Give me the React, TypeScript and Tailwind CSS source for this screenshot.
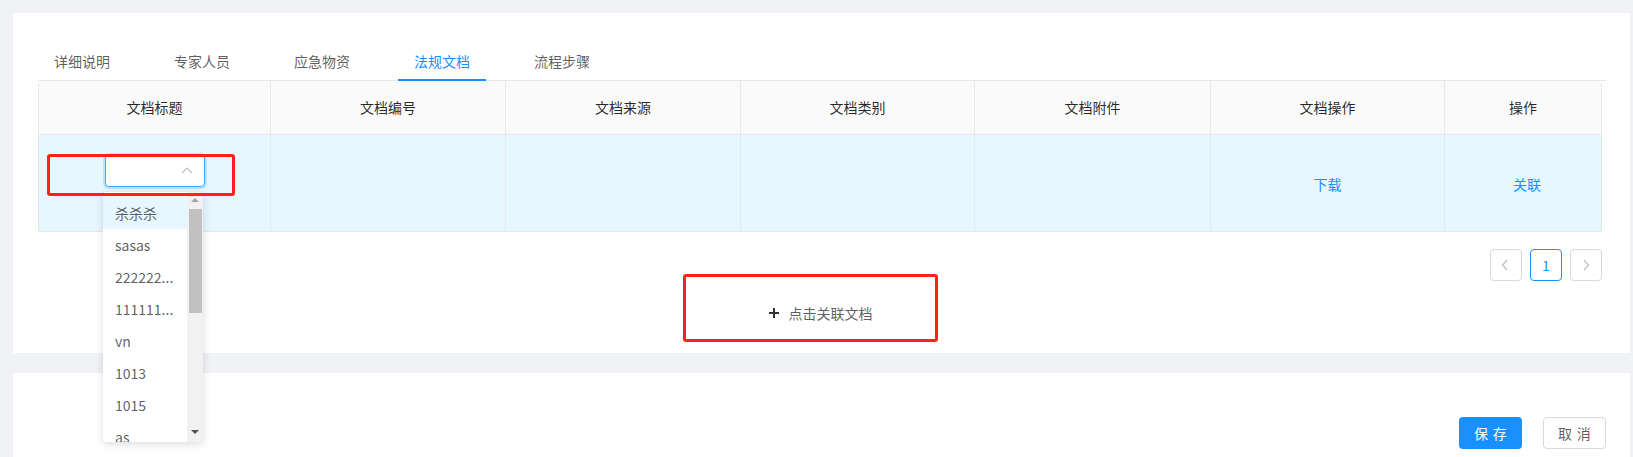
import React from 'react'

const tabs = ['详细说明', '专家人员', '应急物资', '法规文档', '流程步骤']
const columns = ['文档标题', '文档编号', '文档来源', '文档类别', '文档附件', '文档操作', '操作']
const options = ['杀杀杀', 'sasas', '222222...', '111111...', 'vn', '1013', '1015', 'as']

const Chevron = ({ dir, className }: { dir: 'up' | 'left' | 'right'; className?: string }) => {
  const d = dir === 'up' ? 'M2 9l5-5 5 5' : dir === 'left' ? 'M8 2L3.5 7 8 12' : 'M5 2l4.5 5L5 12'
  return (
    <svg className={className} width="14" height="14" viewBox="0 0 14 14" fill="none">
      <path d={d} stroke="currentColor" strokeWidth="1.2" />
    </svg>
  )
}

const App: React.FC = () => {
  return (
    <div className="relative w-[1633px] h-[457px] overflow-hidden bg-[#f0f2f5] pt-[13px] pl-[13px] pr-[3px] font-['Noto_Sans_CJK_SC','Microsoft_YaHei',sans-serif] text-[14px]">
      {/* main card */}
      <div className="bg-white pt-[25px] pl-[25px] pr-[28px] pb-[24px]">
        <div className="flex border-b border-[#e8e8e8] -mr-[4px] h-[43px]">
          {tabs.map((t) => (
            <div
              key={t}
              className={`relative mr-[32px] px-[16px] pt-[12px] leading-[22px] ${
                t === '法规文档' ? 'text-[#1890ff]' : 'text-[rgba(0,0,0,0.65)]'
              }`}
            >
              {t}
              {t === '法规文档' && <div className="absolute left-0 right-0 -bottom-[1px] h-[2px] bg-[#1890ff]"></div>}
            </div>
          ))}
        </div>

        <div className="border-x border-[#e8e8e8] rounded-t-[4px] overflow-hidden">
          <div className="grid grid-cols-[232px_235px_235px_234px_236px_234px_156px] bg-[#fafafa] h-[54px] border-b border-[#e8e8e8]">
            {columns.map((c, i) => (
              <div
                key={c}
                className={`flex items-center justify-center text-[rgba(0,0,0,0.85)] ${
                  i < columns.length - 1 ? 'border-r border-[#e8e8e8]' : ''
                }`}
              >
                {c}
              </div>
            ))}
          </div>
          <div className="grid grid-cols-[232px_235px_235px_234px_236px_234px_156px] bg-[#e6f7ff] h-[97px] border-b border-[#e8e8e8]">
            <div className="border-r border-[#e8e8e8] flex justify-center pt-[20px]">
              <div className="w-[100px] h-[32px] bg-white border border-[#40a9ff] rounded-[4px] shadow-[0_0_0_2px_rgba(24,144,255,0.2)] flex items-center justify-end pr-[10px]">
                <Chevron dir="up" className="text-[rgba(0,0,0,0.25)]" />
              </div>
            </div>
            <div className="border-r border-[#e8e8e8]"></div>
            <div className="border-r border-[#e8e8e8]"></div>
            <div className="border-r border-[#e8e8e8]"></div>
            <div className="border-r border-[#e8e8e8]"></div>
            <div className="border-r border-[#e8e8e8] flex items-center justify-center pt-[2px] text-[#1890ff]">下载</div>
            <div className="flex items-center justify-center pt-[2px] pl-[8px] text-[#1890ff]">关联</div>
          </div>
        </div>

        <div className="flex justify-end gap-[8px] mt-[17px] h-[32px]">
          <div className="w-[32px] h-[32px] border border-[#d9d9d9] rounded-[4px] flex items-center justify-center text-[rgba(0,0,0,0.25)]">
            <Chevron dir="left" />
          </div>
          <div className="w-[32px] h-[32px] border border-[#1890ff] rounded-[4px] flex items-center justify-center text-[#1890ff]">
            1
          </div>
          <div className="w-[32px] h-[32px] border border-[#d9d9d9] rounded-[4px] flex items-center justify-center text-[rgba(0,0,0,0.25)]">
            <Chevron dir="right" />
          </div>
        </div>

        <div className="mt-[16px] h-[32px] flex items-center justify-center text-[rgba(0,0,0,0.65)]">
          <svg width="12" height="12" viewBox="0 0 12 12" className="mr-[9px] text-[#333]">
            <path d="M6 1v10M1 6h10" stroke="currentColor" strokeWidth="2" />
          </svg>
          点击关联文档
        </div>
      </div>

      {/* footer card */}
      <div className="bg-white mt-[20px] h-[100px] pt-[44px] pr-[24px] flex justify-end items-start gap-[21px]">
        <button className="w-[63px] h-[32px] rounded-[4px] bg-[#1890ff] text-white leading-[30px]">
          <span className="tracking-[0.34em] -mr-[0.34em]">保存</span>
        </button>
        <button className="w-[63px] h-[32px] rounded-[4px] bg-white border border-[#d9d9d9] text-[rgba(0,0,0,0.65)] leading-[30px]">
          <span className="tracking-[0.34em] -mr-[0.34em]">取消</span>
        </button>
      </div>

      {/* select dropdown popup */}
      <div className="absolute left-[103px] top-[192px] w-[100px] h-[250px] bg-white rounded-[4px] shadow-[0_2px_8px_rgba(0,0,0,0.15)] overflow-hidden flex">
        <div className="flex-1 pt-[5px]">
          {options.map((o, i) => (
            <div
              key={o}
              className={`h-[32px] pl-[12px] leading-[32px] whitespace-nowrap text-[rgba(0,0,0,0.65)] ${
                i === 0 ? 'bg-[#e6f7ff]' : ''
              }`}
            >
              {o}
            </div>
          ))}
        </div>
        <div className="w-[16px] bg-[#f1f1f1] relative">
          <div className="absolute left-[4px] top-[6px] w-0 h-0 border-x-[4px] border-x-transparent border-b-[4px] border-b-[#a3a3a3]"></div>
          <div className="absolute left-[2px] right-[1px] top-[17px] h-[104px] bg-[#c1c1c1]"></div>
          <div className="absolute left-[4px] bottom-[8px] w-0 h-0 border-x-[4px] border-x-transparent border-t-[4px] border-t-[#505050]"></div>
        </div>
      </div>

      {/* red annotation boxes */}
      <div className="absolute left-[47px] top-[154px] w-[188px] h-[42px] border-[3px] border-[#ff1f1f] rounded-[3px]"></div>
      <div className="absolute left-[683px] top-[274px] w-[255px] h-[68px] border-[3px] border-[#ff1f1f] rounded-[3px]"></div>
    </div>
  )
}

export default App
